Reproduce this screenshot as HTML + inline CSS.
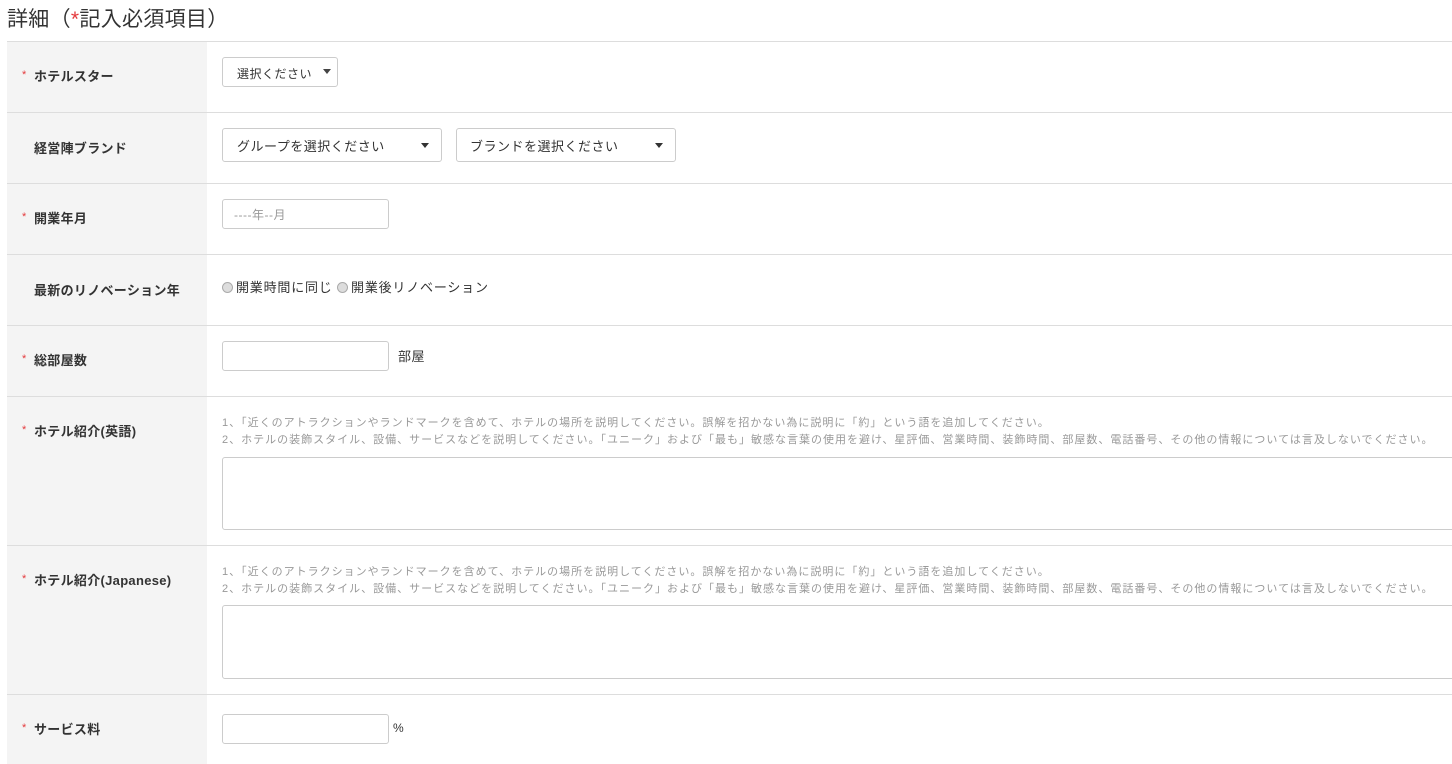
<!DOCTYPE html>
<html><head><meta charset="utf-8"><style>
*{box-sizing:border-box;margin:0;padding:0}
body{width:1452px;height:759px;overflow:hidden;background:#fff;font-family:"Liberation Sans","Noto Sans CJK JP",sans-serif;color:#333;position:relative}
.title{position:absolute;left:7px;top:3px;font-size:21px;color:#333;letter-spacing:0.3px}
.title span{color:#e4393c}
.row{position:absolute;left:7px;right:0;border-top:1px solid #ddd}
.lab{position:absolute;left:0;top:0;bottom:0;width:200px;background:#f4f4f4}
.lab b{position:absolute;left:27px;font-size:13px;font-weight:bold;color:#333;letter-spacing:0.3px}
.lab i{position:absolute;left:15px;font-style:normal;color:#e4393c;font-size:11px}
.box{position:absolute;border:1px solid #ccc;border-radius:3px;background:#fff;font-size:13px;color:#333;letter-spacing:0.5px}
.help{position:absolute;left:222px;font-size:11px;color:#999;line-height:17px;white-space:nowrap;letter-spacing:1px}
.tri{position:absolute;width:0;height:0;border-left:4px solid transparent;border-right:4px solid transparent;border-top:5px solid #333}
.radio{display:inline-block;width:11px;height:11px;border-radius:50%;border:1px solid #aaa;background:#ddd;vertical-align:-1px;margin-right:3px}
</style></head><body>
<div class="title">詳細（<span>*</span>記入必須項目）</div>

<div class="row" style="top:41px;height:71px"><div class="lab"><i style="top:27px">*</i><b style="top:24px">ホテルスター</b></div></div>
<div class="box" style="left:222px;top:57px;width:116px;height:30px;font-size:12px;padding:7px 0 0 14px">選択ください</div>
<div class="tri" style="left:323px;top:69px;border-top-color:#444"></div>

<div class="row" style="top:112px;height:71px"><div class="lab"><b style="top:25px">経営陣ブランド</b></div></div>
<div class="box" style="left:222px;top:128px;width:220px;height:34px;padding:7px 0 0 14px">グループを選択ください</div>
<div class="tri" style="left:421px;top:143px"></div>
<div class="box" style="left:456px;top:128px;width:220px;height:34px;padding:7px 0 0 13px">ブランドを選択ください</div>
<div class="tri" style="left:655px;top:143px"></div>

<div class="row" style="top:183px;height:71px"><div class="lab"><i style="top:27px">*</i><b style="top:24px">開業年月</b></div></div>
<div class="box" style="left:222px;top:199px;width:167px;height:30px;font-size:12px;color:#999;padding:6px 0 0 11px">----年--月</div>

<div class="row" style="top:254px;height:71px"><div class="lab"><b style="top:25px">最新のリノベーション年</b></div></div>
<div style="position:absolute;left:222px;top:277px;font-size:13px;letter-spacing:0.8px"><span class="radio"></span>開業時間に同じ <span class="radio"></span>開業後リノベーション</div>

<div class="row" style="top:325px;height:71px"><div class="lab"><i style="top:27px">*</i><b style="top:24px">総部屋数</b></div></div>
<div class="box" style="left:222px;top:341px;width:167px;height:30px"></div>
<div style="position:absolute;left:398px;top:346px;font-size:13px;letter-spacing:0.5px">部屋</div>

<div class="row" style="top:396px;height:149px"><div class="lab"><i style="top:27px">*</i><b style="top:24px">ホテル紹介(英語)</b></div></div>
<div class="help" style="top:415px">1、「近くのアトラクションやランドマークを含めて、ホテルの場所を説明してください。誤解を招かない為に説明に「約」という語を追加してください。<br>2、ホテルの装飾スタイル、設備、サービスなどを説明してください。「ユニーク」および「最も」敏感な言葉の使用を避け、星評価、営業時間、装飾時間、部屋数、電話番号、その他の情報については言及しないでください。</div>
<div class="box" style="left:222px;top:457px;width:1240px;height:73px"></div>

<div class="row" style="top:545px;height:149px"><div class="lab"><i style="top:27px">*</i><b style="top:24px">ホテル紹介(Japanese)</b></div></div>
<div class="help" style="top:564px">1、「近くのアトラクションやランドマークを含めて、ホテルの場所を説明してください。誤解を招かない為に説明に「約」という語を追加してください。<br>2、ホテルの装飾スタイル、設備、サービスなどを説明してください。「ユニーク」および「最も」敏感な言葉の使用を避け、星評価、営業時間、装飾時間、部屋数、電話番号、その他の情報については言及しないでください。</div>
<div class="box" style="left:222px;top:605px;width:1240px;height:74px"></div>

<div class="row" style="top:694px;height:70px"><div class="lab"><i style="top:27px">*</i><b style="top:24px">サービス料</b></div></div>
<div class="box" style="left:222px;top:714px;width:167px;height:30px"></div>
<div style="position:absolute;left:393px;top:721px;font-size:12px">%</div>
</body></html>
